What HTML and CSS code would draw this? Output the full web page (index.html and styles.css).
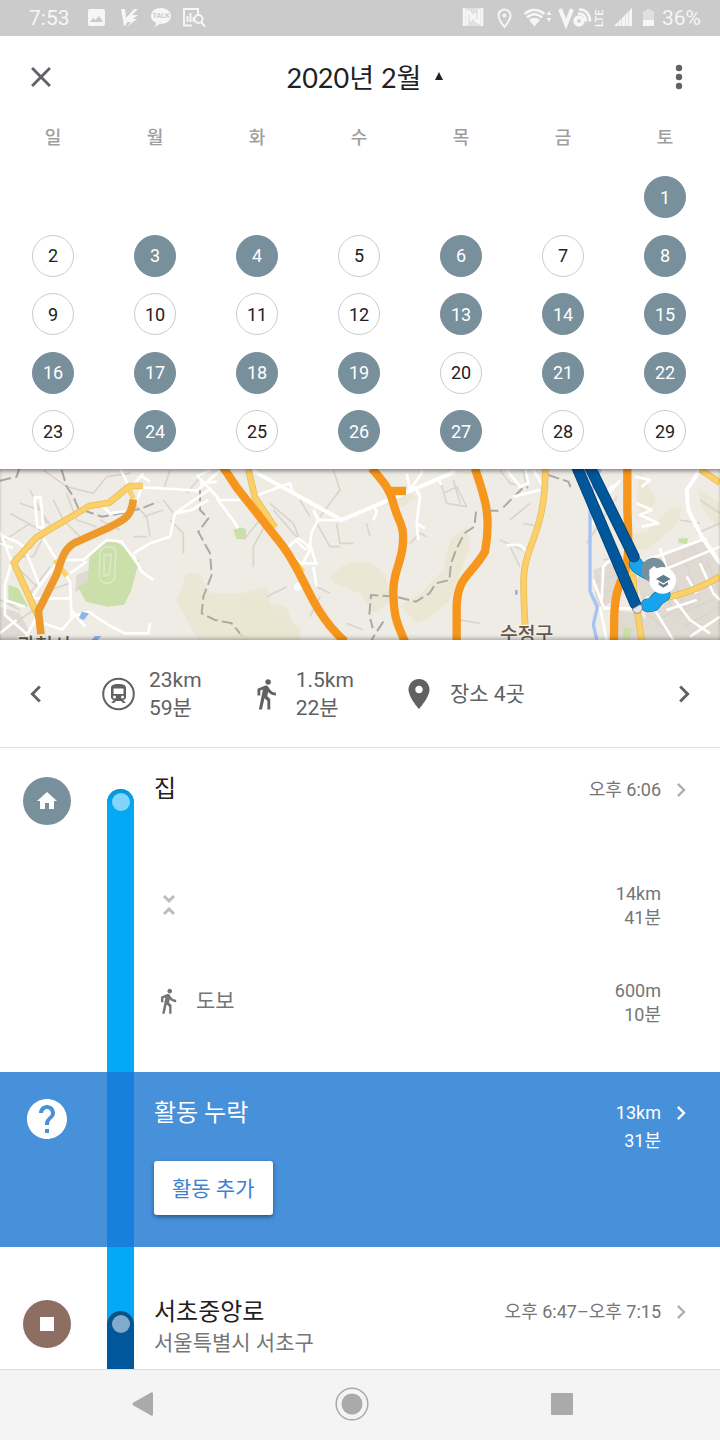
FILE: index.html
```html
<!DOCTYPE html>
<html lang="ko">
<head>
<meta charset="utf-8">
<meta name="viewport" content="width=device-width, initial-scale=1">
<title>타임라인</title>
<link rel="stylesheet" href="styles.css">
</head>
<body>
<div class="status">
  <span class="status-time">7:53</span>
  <div class="status-left">
    <svg width="22" height="22" viewBox="0 0 22 22"><path fill-rule="evenodd" d="M4 2h13a2 2 0 0 1 2 2v13a2 2 0 0 1-2 2H4a2 2 0 0 1-2-2V4a2 2 0 0 1 2-2zm0 13h13l-4-6-3.500 4-2-2z"/></svg>
    <svg width="22" height="22" viewBox="0 0 22 22"><path d="M3 2h4l1 9 8-9h4l-6 6h6l-5 4h4L9 20l4-5H9l2-3-4 7H6z"/></svg>
    <svg width="22" height="22" viewBox="0 0 22 22"><path d="M11 1C5 1 1 4.500 1 9c0 3 2 5.500 5 6.800L5 20l5-3.200h1c6 0 10-3.500 10-7.800S17 1 11 1z"/><text class="talk" x="11" y="11" text-anchor="middle">TALK</text></svg>
    <svg width="24" height="22" viewBox="0 0 24 22"><path class="line" d="M10 18.500H2V2h14v5M5.500 15V9M8.500 15V6M11.500 15v-5"/><circle class="line" cx="16.500" cy="12" r="4"/><path class="line" d="M19 15l4 4.500"/></svg>
  </div>
  <div class="status-right">
    <svg width="22" height="22" viewBox="0 0 22 22"><path class="faded" d="M1 1h20v18H1z"/><path class="nfc" d="M5 18V4.500l4 3V14M17 2v13.500l-4-3V6M6 4l10 12"/><path class="nfc" d="M2 1v18M20 1v18"/></svg>
    <svg width="22" height="22" viewBox="0 0 22 22"><path class="line" d="M12.500 2.500a6 6 0 0 0-6 6c0 4 6 11.500 6 11.500s6-7.500 6-11.500a6 6 0 0 0-6-6z"/><circle cx="12.500" cy="8.500" r="2"/></svg>
    <svg width="28" height="22" viewBox="0 0 28 22"><path class="wifi" d="M2.500 7c6-5.500 14-5.500 20 0M5 10.500c4.500-4.500 10.500-4.500 15 0"/><path d="M7 13c3.500-3 7.500-3 11 0l-5.500 6.500zM24.500 8L27 4l2.500 4zM24.500 11h5L27 15z"/></svg>
    <svg width="48" height="22" viewBox="0 0 48 22"><path class="volte" d="M2 2l6 15L14 2"/><circle class="volte" cx="21" cy="14" r="3.800"/><path class="wifi" d="M20 6.500c5-.5 8 3 8 8M21 2.500c7-.5 11 5 11 12"/><text class="lte" transform="translate(45 20) rotate(-90)">LTE</text></svg>
    <svg width="20" height="22" viewBox="0 0 20 22"><path d="M0 19l4-4v4zM4.500 14.500l3-3V19h-3zM8 11l3-3v11H8zM11.500 7.500l3-3V19h-3zM15 4l3-3v18h-3z"/></svg>
    <svg width="12" height="22" viewBox="0 0 12 22"><path class="faded" d="M1 4h3V2h5v2h3v10H1z"/><path d="M1 13h11v6H1z"/></svg>
    <span>36%</span>
  </div>
</div>

<header class="calendar">
  <div class="toolbar">
    <button class="icon-button" aria-label="닫기"><svg width="34" height="34" viewBox="0 0 24 24"><path d="M19 6.410L17.590 5 12 10.590 6.410 5 5 6.410 10.590 12 5 17.590 6.410 19 12 13.410 17.590 19 19 17.590 13.410 12z"/></svg></button>
    <button class="month">2020년 2월 <svg width="10" height="10" viewBox="0 0 10 10"><path d="M5 1l4 8H1z"/></svg></button>
    <button class="icon-button" aria-label="더보기"><svg width="34" height="34" viewBox="0 0 34 34"><circle cx="17" cy="8" r="3.200"/><circle cx="17" cy="17" r="3.200"/><circle cx="17" cy="26" r="3.200"/></svg></button>
  </div>
  <table class="days">
    <thead><tr><th>일</th><th>월</th><th>화</th><th>수</th><th>목</th><th>금</th><th>토</th></tr></thead>
    <tbody>
      <tr><td></td><td></td><td></td><td></td><td></td><td></td><td><button class="day on">1</button></td></tr>
      <tr><td><button class="day">2</button></td><td><button class="day on">3</button></td><td><button class="day on">4</button></td><td><button class="day">5</button></td><td><button class="day on">6</button></td><td><button class="day">7</button></td><td><button class="day on">8</button></td></tr>
      <tr><td><button class="day">9</button></td><td><button class="day">10</button></td><td><button class="day">11</button></td><td><button class="day">12</button></td><td><button class="day on">13</button></td><td><button class="day on">14</button></td><td><button class="day on">15</button></td></tr>
      <tr><td><button class="day on">16</button></td><td><button class="day on">17</button></td><td><button class="day on">18</button></td><td><button class="day on">19</button></td><td><button class="day">20</button></td><td><button class="day on">21</button></td><td><button class="day on">22</button></td></tr>
      <tr><td><button class="day">23</button></td><td><button class="day on">24</button></td><td><button class="day">25</button></td><td><button class="day on">26</button></td><td><button class="day on">27</button></td><td><button class="day">28</button></td><td><button class="day">29</button></td></tr>
    </tbody>
  </table>
</header>

<section class="map" aria-label="지도">
  <svg class="map-art" viewBox="0 0 720 171" preserveAspectRatio="xMidYMid slice">
    <!-- west -->
    <g transform="translate(0 -9) scale(.33333)">
      <path class="sand" d="M560 340l40 0 30 60 80 0 60 20 90 20 40 110H600l-50-90-20-40z"/>
      <path class="town" d="M0 440l60 20 40 80H0zM230 345l50-20-20 60-35 10z"/>
      <path class="park" d="M268 290l35-40 40-8 30 20 45 40-25 90-20 42-50 6-65-15-25-45 30-15zM25 375l30 10 30 55-60-5zM700 210l20-8 18 6v28l-28 2z"/>
      <path class="park-line" d="M300 275c10-20 45-20 48 0l-5 80c-10 20-40 20-45-5zM312 285l22-2-6 60-16 5z"/>
      <path class="minor" d="M60 130l60 20 40 60M90 90l50 100M0 250l90-60M30 160l90 50M130 230l-30 60-60 0M160 120l30 60 60 60M200 100l30 80 60 20M130 30l70 50 80 20M280 100l40-50 70-10M300 180l60 30M400 130l40 40 10 60M430 170l60-20M440 230l-40 0M510 180l40 40 0 60M490 120l30 40M60 330l60 60M90 400l60-80M0 420l60 30M30 500l70-50M150 390l60-20M560 100l50-60M510 30l-20 60"/>
      <path class="border" d="M0 62l50-12 8-25M185 30l15 50 20 30 15 35 70 25 60-10 60-15 50-20M600 90v60l25 25-30 40 35 65 5 65-25 65-5 50 40 20 50 10 50 60"/>
      <path class="road" d="M360 25l30 60 40-45M420 45l30 20M430 82l90 5 70 5 70-60M590 45l70 75h60M625 90l-100 70-15 70-60 20-50 30M590 50l40-20M600 70l50-5M650 115l45 60 20 30M525 160l50-10 50-30M310 140l20 20 70-10 25-65M0 215l35 90-20 70 0 90 80 70M0 225l50 20 40 30M0 250l40 15M15 420l60 20M0 520l50-40M70 545l60-110M95 415l40-60 40-50M90 415h120M130 235l80 130 5 110-30 35M215 450l40 50M120 380l-40-100M104 112h18l8 90-18 0zM190 300h60l70-60 45 5 50 70-15-30 25 50 35 25M210 340l50-35M215 470l50-15 60 40 50 25 70 0 5-30M130 490l60 20"/>
      <path class="yellow-edge" d="M428 78l-40 0-60 50-60 10-160 95-67 75 25 55 55 120"/>
      <path class="yellow" d="M428 78l-40 0-60 50-60 10-160 95-67 75 25 55 55 120M165 300l35 48M385 85l15 30"/>
      <path class="highway" d="M400 118c-5 55-30 62-75 85l-100 45c-35 20-40 50-55 95l-55 110 8 70"/>
      <path class="water" d="M245 455l22 5-15 20-15-5zM285 528h20l-15 15h-18z"/>
      <text class="map-label" x="52" y="577">과천시</text>
    </g>
    <!-- centre -->
    <g transform="translate(240 -9) scale(.33333)">
      <path class="sand" d="M270 350c50-60 140-60 170 10l20 60-60 40-40-60-80-30zM480 440l60-40 70-70 20-90 50-40 10 60-60 160-70 60-30 10zM0 400l80-20 20 80 80 40v40H0zM420 130l90-35 20 20-50 30z"/>
      <path class="minor" d="M60 40l90 50M280 30l20 60-60 80M180 120l30 50M90 170l-50 90 0 60M90 130l70 60 20 50M230 190l40 70 30 0M290 190l10 60 40 0M60 180l-50 60M100 150l60 70 50 50M380 190l10 40M510 250l30-30 20 10M600 60l20 70 60 10-30-60-40 20M640 60l20 70M230 380l40 20M80 410l60-30M660 480l60 10M320 490l50 20M210 470l30-60"/>
      <path class="border" d="M708 155l-5 45-30 20-25 50-15 40-5 50-40 10-20 30-40 25-60-15-75-5-5 60 10 40M430 485l-20 30-15 25"/>
      <path class="road thick" d="M35 30l270 150 340-145"/>
      <path class="road" d="M40 110l110-40 10 30M305 180l-70 0-15-30M235 180l-20 35-5 40 20 60M400 135l10 20-10 25M140 265l35-30 25 20 10 15-25 45-30-30zM165 240l35 30M190 310l40 0M220 320l10 60M500 40l10 50 35-50 0-10M530 90l10 20-10 80 5 50M530 190l25 15M595 55l10 20"/>
      <circle class="road-dot" cx="175" cy="380" r="12"/>
      <path class="yellow-edge" d="M25 28l20 85 60 90"/><path class="yellow" d="M25 28l20 85 60 90M165 305l25 30"/>
      <path class="highway major" d="M-58 10L-8 85l138 175c70 95 80 190 185 285M395 25c30 35 55 60 65 105 15 60 35 60 28 130-8 60-30 80-28 140 2 60 5 80 35 145M455 93h43M705 25c30 90 50 140 30 250-40 70-80 70-85 160v105"/>
    </g>
    <!-- east -->
    <g transform="translate(480 -9) scale(.33333)">
      <path class="town" d="M340 330l50-20 40 40-20 70-60 30zM500 310l170-70 50 80v220H560l-60-60-30-120zM400 450l80 10 80 80H410z"/>
      <path class="sand" d="M480 30l50 90-40 60-20-60zM570 145l35-5-10 50-35 30-50 45-60 10-10-50 60-10zM650 80l70 50v80l-50-60z"/>
      <path class="park" d="M430 500l25 5-5 30-20 5zM595 235l30 0-5 18-25-5z"/>
      <path class="minor" d="M60 240l90 40M90 260l30 60M130 190l50 10M60 30l30 40 50 10-10-50M90 180l60-50M320 250l40-60 50-80M340 370l80-30M345 400l70-10M370 300l60-10M520 330l60 120M560 310l60 150M610 290l50 130M680 300l40 100M500 460l80 70M520 420l200-60M580 470l140-60M610 500l110-60M640 260l40 70M600 180l60 10M660 120l60 40M650 220l70-30M500 360l80-40M530 480l110-50"/>
      <path class="border" d="M30 152h25M70 142l30-30 25-25 20-5M205 45l60 20 10 25"/>
      <path class="road" d="M80 30l40 50 25-10-10-45M160 30l30 50M100 110l80-20M80 255l40 0 25 25M420 60l-20 25-50 50-10 60M345 130l55-55M500 300l180-65M540 265l30 90M550 330l170-70M500 410l80 130M570 400l60 80 60 40M620 350l30 50M660 310l40 90 20 20M560 450l90-30M365 420l5-100 30-30M370 445h120M370 440l-30-80M380 540l-20-100M630 530l90-60M465 50l45 10-25 20M470 130l45 20-35 15 55 25-50 10"/>
      <path class="road thick" d="M660 30l-40 60 5 60 40 80 55 80"/>
      <path class="river" d="M360 28l-30 80v285l22 50-12 50 10 45"/>
      <path class="water" d="M105 390h8v14h-8z"/>
      <path class="yellow-edge" d="M196 28c0 110-20 170-45 235-22 60-25 80-15 240M660 28l60 40M455 300l10 110 20 130M545 415c70-10 130-40 175-65"/>
      <path class="yellow" d="M196 28c0 110-20 170-45 235-22 60-25 80-15 240M660 28l60 40M455 300l10 110 20 130M545 415c70-10 130-40 175-65"/>
      <path class="highway major" d="M442 25v120c3 100 10 170-20 220-20 50-20 90-20 180"/>
      <path class="walk-edge" d="M467 310c2 10 20 20 40 30M503 436l16-2 14-18 18-12"/>
      <path class="walk" d="M467 310c2 10 20 20 40 30M503 436l16-2 14-18 18-12"/>
      <path class="trip-edge" d="M287 12l179 420M325 12l137 278"/>
      <path class="trip" d="M287 12l179 420M325 12l137 278"/>
      <path class="stop" d="M457 447l24-14a15 15 0 1 1-24 14z"/>
      <circle class="home-pin" cx="521" cy="330" r="37"/>
      <path class="white" d="M508 330l14-12 14 12v20h-28z"/>
      <circle class="white" cx="548" cy="361" r="40"/>
      <path class="school" d="M528 357l22-13 22 13-22 13zM536 366l14 8 14-8v8l-14 9-14-9z"/>
      <text class="map-label" x="60" y="544">수정구</text>
    </g>
  </svg>
</section>

<section class="summary">
  <button class="page-button" aria-label="이전"><svg width="34" height="34" viewBox="0 0 24 24"><path d="M15.410 7.410L14 6l-6 6 6 6 1.410-1.410L10.830 12z"/></svg></button>
  <div class="stats">
    <div class="stat"><svg width="36" height="36" viewBox="0 0 36 36"><circle class="ring" cx="18.500" cy="18" r="15.300"/><path fill-rule="evenodd" d="M18.500 8c-5 0-7.500 1-7.500 4v9c0 2 1.500 3 3 3l-3 3h3l2-2h5l2 2h3l-3-3c1.500 0 3-1 3-3v-9c0-3-2.500-4-7.500-4zm-5 4.500h10V18h-10zm1 7a1.500 1.500 0 1 1 0 3 1.500 1.500 0 0 1 0-3zm8 0a1.500 1.500 0 1 1 0 3 1.500 1.500 0 0 1 0-3z"/></svg><p>23km<br>59분</p></div>
    <div class="stat"><svg width="34" height="34" viewBox="0 0 24 24"><path d="M13.500 5.500c1.100 0 2-.9 2-2s-.9-2-2-2-2 .9-2 2 .9 2 2 2zM9.800 8.900L7 23h2.100l1.800-8 2.100 2v6h2v-7.500l-2.100-2 .6-3C14.800 12 16.800 13 19 13v-2c-1.900 0-3.500-1-4.300-2.400l-1-1.600c-.4-.6-1-1-1.700-1-.3 0-.5.1-.8.1L6 8.300V13h2V9.600l1.800-.7"/></svg><p>1.5km<br>22분</p></div>
    <div class="stat"><svg width="36" height="36" viewBox="0 0 24 24"><path d="M12 2C8.130 2 5 5.130 5 9c0 5.250 7 13 7 13s7-7.750 7-13c0-3.870-3.130-7-7-7zm0 9.500c-1.380 0-2.500-1.120-2.500-2.500s1.120-2.500 2.500-2.500 2.500 1.120 2.500 2.500-1.120 2.500-2.500 2.500z"/></svg><p>장소 4곳</p></div>
  </div>
  <button class="page-button" aria-label="다음"><svg width="34" height="34" viewBox="0 0 24 24"><path d="M10 6L8.590 7.410 13.170 12l-4.580 4.590L10 18l6-6z"/></svg></button>
</section>

<main class="timeline">
  <article class="entry place">
    <div class="badge home"><svg width="24" height="24" viewBox="0 0 24 24"><path d="M10 20v-6h4v6h5v-8h3L12 3 2 12h3v8z"/></svg></div>
    <div class="track"><div class="cap"><i></i></div></div>
    <div class="body"><h2>집</h2></div>
    <a class="side" href="#home">오후 6:06 <svg width="28" height="28" viewBox="0 0 24 24"><path d="M10 6L8.590 7.410 13.170 12l-4.580 4.590L10 18l6-6z"/></svg></a>
  </article>
  <article class="entry move">
    <div class="track"></div>
    <div class="body"><svg class="collapse" width="30" height="30" viewBox="0 0 30 30"><path d="M10 6l5 5 5-5M10 24l5-5 5 5"/></svg></div>
    <p class="side">14km<br>41분</p>
  </article>
  <article class="entry move last">
    <div class="track"></div>
    <div class="body"><svg width="28" height="28" viewBox="0 0 24 24"><path d="M13.500 5.500c1.100 0 2-.9 2-2s-.9-2-2-2-2 .9-2 2 .9 2 2 2zM9.800 8.900L7 23h2.100l1.800-8 2.100 2v6h2v-7.500l-2.100-2 .6-3C14.800 12 16.800 13 19 13v-2c-1.900 0-3.500-1-4.300-2.400l-1-1.600c-.4-.6-1-1-1.700-1-.3 0-.5.1-.8.1L6 8.300V13h2V9.600l1.800-.7"/></svg><span>도보</span></div>
    <p class="side">600m<br>10분</p>
  </article>
  <article class="entry missing">
    <div class="badge"><svg width="48" height="48" viewBox="0 0 24 24"><path d="M12 2C6.480 2 2 6.480 2 12s4.480 10 10 10 10-4.480 10-10S17.520 2 12 2zm1 17h-2v-2h2v2zm2.070-7.750l-.9.920C13.450 12.900 13 13.500 13 15h-2v-.5c0-1.100.45-2.100 1.170-2.830l1.240-1.260c.37-.36.59-.86.590-1.410 0-1.100-.9-2-2-2s-2 .9-2 2H8c0-2.210 1.790-4 4-4s4 1.790 4 4c0 .88-.36 1.680-.93 2.250z"/></svg></div>
    <div class="track"></div>
    <div class="body"><h2>활동 누락</h2><button class="add">활동 추가</button></div>
    <a class="side" href="#missing"><span>13km<br>31분</span> <svg width="28" height="28" viewBox="0 0 24 24"><path d="M10 6L8.590 7.410 13.170 12l-4.580 4.590L10 18l6-6z"/></svg></a>
  </article>
  <article class="entry place final">
    <div class="badge stop-badge"><svg width="24" height="24" viewBox="0 0 24 24"><path d="M5 5h14v14H5z"/></svg></div>
    <div class="track"><div class="cap"><i></i></div></div>
    <div class="body"><h2>서초중앙로</h2><p>서울특별시 서초구</p></div>
    <a class="side" href="#seocho">오후 6:47–오후 7:15 <svg width="28" height="28" viewBox="0 0 24 24"><path d="M10 6L8.590 7.410 13.170 12l-4.580 4.590L10 18l6-6z"/></svg></a>
  </article>
</main>

<nav class="system">
  <button aria-label="뒤로"><svg width="34" height="34" viewBox="0 0 34 34"><path d="M27 6.500v21q0 2-2 1L7.500 18.500q-2-1.500 0-3L25 5.500q2-1 2 1z"/></svg></button>
  <button aria-label="홈"><svg width="34" height="34" viewBox="0 0 34 34"><circle class="home-ring" cx="17" cy="17" r="15.800"/><circle cx="17" cy="17" r="10.500"/></svg></button>
  <button aria-label="최근 앱"><svg width="34" height="34" viewBox="0 0 34 34"><rect x="6" y="6" width="22" height="22" rx="1"/></svg></button>
</nav>
</body>
</html>
```
FILE: styles.css
```css
* { box-sizing: border-box; }
body {
  margin: 0;
  min-height: 100vh;
  display: flex;
  flex-direction: column;
  background: #fff;
  color: #212121;
  font-family: Roboto, "Noto Sans CJK KR", sans-serif;
  font-size: 18px;
}
svg { display: block; flex: none; fill: currentColor; }
button { margin: 0; padding: 0; border: 0; background: none; font: inherit; color: inherit; cursor: pointer; }
h2, p { margin: 0; font-weight: 400; }
a { color: inherit; text-decoration: none; }

.status { display: flex; align-items: center; height: 36px; padding: 0 19px 0 29px; background: #cbcbcb; color: #f6f6f6; font-size: 21px; }
.status-time { margin-right: 16px; }
.status-left, .status-right { display: flex; align-items: center; }
.status-left { gap: 10px; }
.status-right { gap: 8px; margin-left: auto; }
.status .line { fill: none; stroke: currentColor; stroke-width: 2; }
.status .wifi { fill: none; stroke: currentColor; stroke-width: 2.500; }
.status .nfc { fill: none; stroke: currentColor; stroke-width: 2.500; }
.status .volte { fill: none; stroke: currentColor; stroke-width: 4; }
.status .faded { opacity: .5; }
.status svg { overflow: visible; }
.talk { fill: #cbcbcb; font-size: 7px; font-weight: 700; }
.lte { font-size: 11px; font-weight: 500; }

.toolbar { display: grid; grid-template-columns: 93px 1fr 82px; align-items: center; height: 82px; color: #5f6368; }
.icon-button { display: flex; align-items: center; justify-content: center; width: 82px; height: 48px; }
.month { display: flex; align-items: center; justify-content: center; gap: 13px; padding-bottom: 2px; color: #202124; font-family: Lato, "Noto Sans CJK KR", sans-serif; font-size: 27px; }
.calendar { padding-bottom: 9px; }
.days { width: calc(100% - 6px); margin: 0 4px 0 2px; border-collapse: collapse; table-layout: fixed; text-align: center; }
.days th { padding: 7px 0 17px; color: #9e9e9e; font-weight: 500; line-height: 26px; }
.days td { height: 58px; padding: 0; }
.days tr:nth-child(even) td { height: 59px; }
.day { display: block; width: 42px; height: 42px; margin: 0 auto; border: 1px solid #ccc; border-radius: 50%; }
.day.on { border-color: #78909c; background: #78909c; color: #fff; }

.map { position: relative; height: 171px; overflow: hidden; background: #efece5; }
.map::after { content: ""; position: absolute; inset: 0; box-shadow: inset 0 4px 4px -2px rgba(0, 0, 0, .45), inset 0 -4px 5px -3px rgba(0, 0, 0, .35); }
.map-art { width: 100%; height: 100%; }
.map-art path { fill: none; stroke-linejoin: round; }
.map-art .sand { fill: #ebe5cf; opacity: .75; }
.map-art .town { fill: #e0dad2; }
.map-art .park { fill: #cbdfaa; }
.map-art .park-line { stroke: #dbe9c5; stroke-width: 5; }
.map-art .minor { stroke: #d9d5ce; stroke-width: 5; }
.map-art .border { stroke: #aaa9a7; stroke-width: 6; stroke-dasharray: 34 13; }
.map-art .road { stroke: #fff; stroke-width: 8; }
.map-art .road.thick { stroke-width: 12; }
.map-art .road-dot { fill: #fff; }
.map-art .yellow-edge { stroke: #e8bd5b; stroke-width: 20; }
.map-art .yellow { stroke: #fcd068; stroke-width: 15; }
.map-art .highway { stroke: #ec9a2c; stroke-width: 23; }
.map-art .highway.major { stroke: #f7961d; stroke-width: 25; }
.map-art .river { stroke: #a6c3f5; stroke-width: 10; }
.map-art .water { fill: #8fb4ec; }
.map-art .trip-edge { stroke: #033f70; stroke-width: 34; stroke-linecap: round; }
.map-art .trip { stroke: #01579b; stroke-width: 29; stroke-linecap: round; }
.map-art .walk-edge { stroke: #0b74a8; stroke-width: 42; stroke-linecap: round; }
.map-art .walk { stroke: #18a3ee; stroke-width: 38; stroke-linecap: round; }
.map-art .stop { fill: #e4e4e4; stroke: #666; stroke-width: 2; }
.map-art .home-pin { fill: #78909c; }
.map-art .white { fill: #fff; }
.map-art .school { fill: #607d8b; }
.map-label { fill: #635b50; stroke: #f4f0e8; stroke-width: 8; paint-order: stroke; font-family: "Noto Sans CJK KR", sans-serif; font-size: 58px; font-weight: 500; }

.summary { display: flex; align-items: center; justify-content: space-between; height: 108px; border-bottom: 1px solid #e0e0e0; color: #616161; font-size: 21px; line-height: 28px; }
.page-button { display: flex; align-items: center; justify-content: center; width: 72px; height: 72px; }
.stats { display: flex; flex: 1; gap: 47px; padding-left: 28px; }
.stat { display: flex; align-items: center; gap: 13px; }
.ring { fill: none; stroke: currentColor; stroke-width: 2; }

.timeline { display: flex; flex: 1; flex-direction: column; }
.entry { display: grid; grid-template-columns: 107px 27px 1fr auto; color: #757575; }
.badge { grid-column: 1; display: flex; align-items: center; justify-content: center; width: 48px; height: 48px; margin: 29px 0 0 23px; border-radius: 50%; color: #fff; }
.home { background: #78909c; }
.stop-badge { background: #8d6e63; }
.track { grid-column: 2; background: #03a9f4; }
.body { grid-column: 3; padding-left: 20px; font-size: 21px; line-height: 30px; }
.body h2 { color: #212121; font-size: 24px; line-height: 32px; }
.side { grid-column: 4; display: flex; align-items: flex-start; justify-content: flex-end; gap: 6px; padding: 28px 25px 0 0; line-height: 28px; text-align: right; }
.side svg { color: #b0b0b0; }
.place { min-height: 109px; }
.place .body { padding-top: 25px; }
.place .track { margin-top: 41px; border-radius: 14px 14px 0 0; }
.cap { display: flex; justify-content: center; height: 27px; padding-top: 4px; border-radius: 14px 14px 0 0; background: linear-gradient(#0695d6, #03a9f4 60%); }
.cap i { width: 18px; height: 18px; border-radius: 50%; background: #81d4fa; }
.move { min-height: 96px; }
.move .body { display: flex; align-items: center; gap: 14px; }
.collapse path { fill: none; stroke: #bdbdbd; stroke-width: 3; }
.move .side { display: block; align-self: center; padding: 2px 59px 0 0; line-height: 24px; }
.move.last { min-height: 119px; }
.move.last .body { padding-bottom: 23px; }
.move.last .side { padding-bottom: 21px; }
.missing { min-height: 175px; background: #4790da; color: #fff; }
.missing .badge { margin-top: 23px; }
.missing .track { background: #1680dc; }
.missing .body { padding-top: 25px; }
.missing h2, .missing .side svg { color: #fff; }
.missing .side { padding-top: 27px; }
.add { height: 54px; margin-top: 32px; padding: 2px 18px 0; border-radius: 3px; background: #fff; box-shadow: 0 2px 4px rgba(0, 0, 0, .4); color: #3f7fd0; }
.final { flex: 1; min-height: 121px; }
.final .badge { margin-top: 53px; }
.final .body { padding-top: 49px; }
.final .side { padding-top: 51px; }
.final .track { margin-top: 0; padding-top: 64px; border-radius: 0; background: linear-gradient(#03a9f4 78px, #01579b 78px); }
.final .cap { background: linear-gradient(#124f80, #01579b 60%); }
.final .cap i { background: #81abcd; }

.system { display: grid; grid-template-columns: repeat(3, 1fr); height: 71px; padding: 0 53px 2px 38px; border-top: 1px solid #dcdcdc; background: #f4f4f4; color: #aaa; }
.system button { display: flex; align-items: center; justify-content: center; }
.home-ring { fill: none; stroke: currentColor; stroke-width: 1.500; }
```
